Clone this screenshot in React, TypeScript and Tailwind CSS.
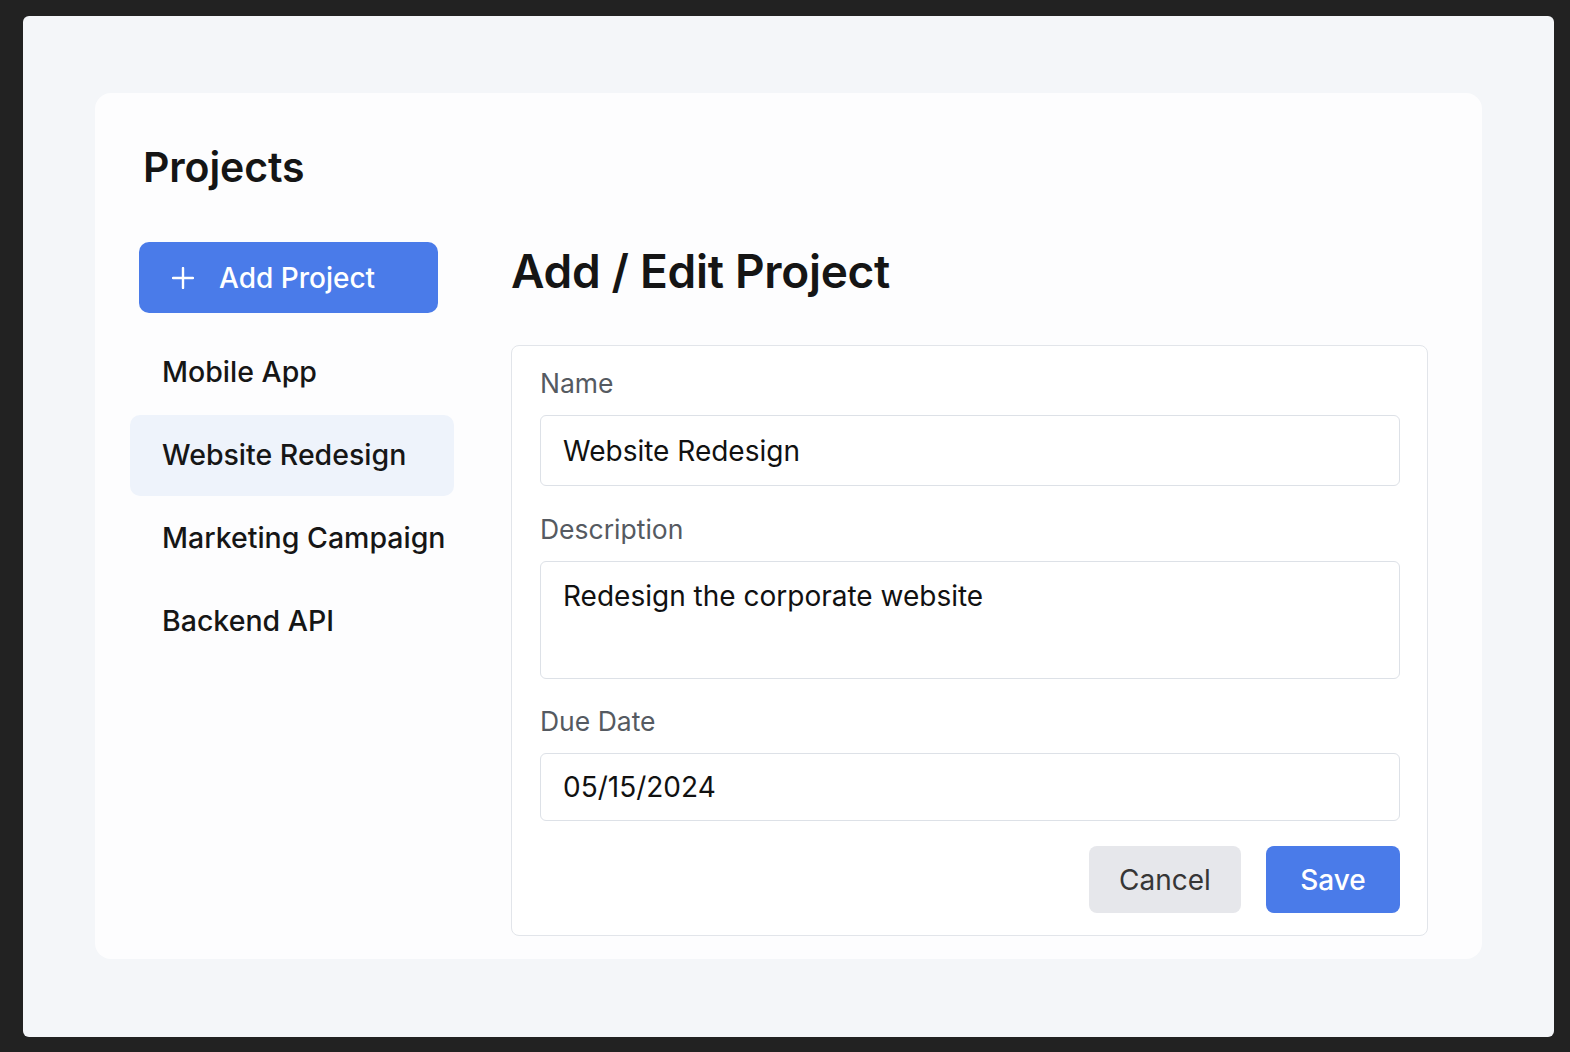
import { useState } from "react";

const projects = ["Mobile App", "Website Redesign", "Marketing Campaign", "Backend API"];

export default function App() {
  const [selected, setSelected] = useState("Website Redesign");
  const [name, setName] = useState("Website Redesign");
  const [description, setDescription] = useState("Redesign the corporate website");
  const [dueDate, setDueDate] = useState("05/15/2024");

  return (
    <div
      className="h-[1052px] w-[1570px] bg-[#222222] pt-[16px] pl-[23px] pr-[16px] pb-[15px]"
      style={{ fontFamily: "Inter, 'Noto Sans', sans-serif" }}
    >
      <div className="h-full rounded-md bg-[#f4f6f9] pt-[77px] pl-[72px] pr-[72px]">
        <div className="h-[866px] rounded-2xl bg-[#fdfdfe] pl-[35px] pr-[54px]">
          <div className="pt-[50px]">
            <h1 className="ml-[13px] text-[41px] leading-[48px] font-semibold text-[#151515] tracking-[-0.1px]">
              Projects
            </h1>
          </div>

          <div className="mt-[51px] flex">
            {/* sidebar */}
            <aside className="w-[324px] shrink-0">
              <button className="ml-[9px] flex h-[71px] w-[299px] items-center rounded-[10px] bg-[#4a7be9] pl-[33px] text-[28px] font-medium text-white">
                <svg width="22" height="22" viewBox="0 0 22 22" className="mr-[25px]">
                  <path d="M11 1v20M1 11h20" stroke="white" strokeWidth="2.4" strokeLinecap="round" />
                </svg>
                Add Project
              </button>
              <ul className="mt-[19px] flex flex-col gap-[2px]">
                {projects.map((p) => (
                  <li key={p}>
                    <button
                      onClick={() => setSelected(p)}
                      className={
                        "flex h-[81px] w-full items-center rounded-[10px] pl-[32px] text-[28.5px] font-medium text-[#161616] " +
                        (selected === p ? "bg-[#eef3fb]" : "")
                      }
                    >
                      {p}
                    </button>
                  </li>
                ))}
              </ul>
            </aside>

            {/* form */}
            <section className="ml-[57px] flex-1">
              <h2 className="pt-[2px] text-[46px] leading-[55px] font-semibold text-[#151515] tracking-[-0.3px]">
                Add / Edit Project
              </h2>
              <div className="mt-[46px] rounded-lg border border-[#e2e5ea] bg-white pt-[21px] pl-[28px] pr-[27px] pb-[22px]">
                <label className="block text-[26.5px] leading-[32px] text-[#555a61]">Name</label>
                <input
                  value={name}
                  onChange={(e) => setName(e.target.value)}
                  className="mt-[16px] h-[71px] w-full rounded-md border border-[#dde1e7] px-[22px] text-[28px] text-[#111] outline-none"
                />

                <label className="mt-[27px] block text-[26.5px] leading-[32px] text-[#555a61]">Description</label>
                <textarea
                  value={description}
                  onChange={(e) => setDescription(e.target.value)}
                  className="mt-[16px] block h-[118px] w-full resize-none rounded-md border border-[#dde1e7] px-[22px] pt-[14px] text-[28px] leading-[40px] text-[#111] outline-none"
                />

                <label className="mt-[26px] block text-[26.5px] leading-[32px] text-[#555a61]">Due Date</label>
                <input
                  value={dueDate}
                  onChange={(e) => setDueDate(e.target.value)}
                  className="mt-[16px] h-[68px] w-full rounded-md border border-[#dde1e7] px-[22px] text-[28px] text-[#111] outline-none"
                />

                <div className="mt-[25px] flex justify-end gap-[25px]">
                  <button className="h-[67px] w-[152px] rounded-lg bg-[#e6e7eb] text-[28px] text-[#363636]">
                    Cancel
                  </button>
                  <button className="h-[67px] w-[134px] rounded-lg bg-[#4a7be9] text-[28px] font-medium text-white">
                    Save
                  </button>
                </div>
              </div>
            </section>
          </div>
        </div>
      </div>
    </div>
  );
}
